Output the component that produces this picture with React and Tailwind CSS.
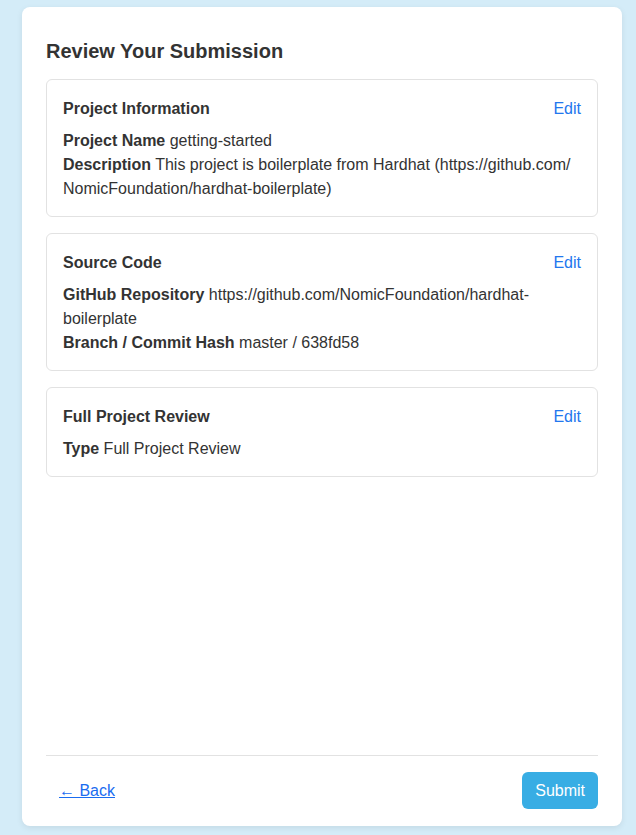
import React from 'react';

const sections = [
  {
    title: 'Project Information',
    rows: [
      ['Project Name', 'getting-started'],
      ['Description', 'This project is boilerplate from Hardhat (https://github.com/ NomicFoundation/hardhat-boilerplate)'],
    ],
  },
  {
    title: 'Source Code',
    rows: [
      ['GitHub Repository', 'https://github.com/NomicFoundation/hardhat-boilerplate'],
      ['Branch / Commit Hash', 'master / 638fd58'],
    ],
  },
  {
    title: 'Full Project Review',
    rows: [['Type', 'Full Project Review']],
  },
];

function Section({ title, rows }) {
  return (
    <div className="border border-[#e2e2e2] rounded-[6px] px-4 pt-[17px] pb-[15px]">
      <div className="flex items-center justify-between">
        <h3 className="font-bold text-[16px] leading-6">{title}</h3>
        <a href="#" className="text-[#2277ee] text-[16px] leading-6">Edit</a>
      </div>
      <div className="mt-2">
        {rows.map(([k, v]) => (
          <p key={k} className="text-[16px] leading-6 break-words">
            <strong className="font-bold">{k}</strong> {v}
          </p>
        ))}
      </div>
    </div>
  );
}

export default function App() {
  return (
    <div className="min-h-[835px] bg-[#d4ecf8] pl-[22px] pr-[14px] pt-[7px] pb-[9px] text-[#333333]" style={{ fontFamily: '"Liberation Sans", Arial, sans-serif' }}>
      <div className="h-[819px] bg-white rounded-[8px] shadow-[0_2px_6px_rgba(0,0,0,0.08)] px-6 pt-[30px] pb-[17px] flex flex-col">
        <h2 className="text-[20px] leading-7 font-bold mb-[14px]">Review Your Submission</h2>
        <div className="flex flex-col gap-4 flex-1">
          {sections.map(s => <Section key={s.title} {...s} />)}
        </div>
        <div className="border-t border-[#e2e2e2] pt-4 flex items-center justify-between">
          <a href="#" className="ml-[13px] text-[#1a6cf0] underline text-[16px] leading-6">← Back</a>
          <button className="bg-[#38ade4] text-white text-[16px] leading-6 rounded-[6px] px-[13px] h-[37px]">Submit</button>
        </div>
      </div>
    </div>
  );
}
